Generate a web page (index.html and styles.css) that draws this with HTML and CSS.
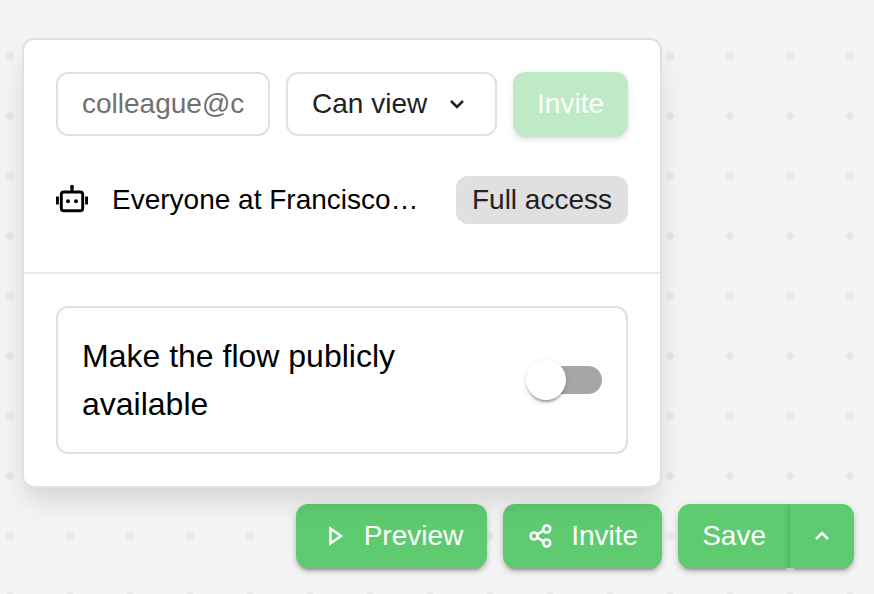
FILE: index.html
```html
<!DOCTYPE html>
<html lang="en">
<head>
  <meta charset="utf-8">
  <meta name="viewport" content="width=device-width, initial-scale=1">
  <title>Share flow</title>
  <link rel="stylesheet" href="styles.css">
</head>
<body>
  <main class="canvas">
    <section class="card" aria-label="Share">
      <div class="share">
        <form class="invite-form">
          <input class="field email" type="email" placeholder="colleague@c" aria-label="Email">
          <div class="select-wrap">
            <select class="field role" aria-label="Access level">
              <option>Can view</option>
            </select>
            <svg class="chevron" viewBox="0 0 32 32" aria-hidden="true"><path d="m10 13 6 6 6-6"/></svg>
          </div>
          <button class="button is-disabled" type="submit" disabled>Invite</button>
        </form>
        <div class="member">
          <svg class="icon-large robot" viewBox="0 0 32 32" aria-hidden="true">
            <rect x="5.300" y="8" width="21.400" height="18.700" rx="2.500"/>
            <path d="M16 8V3M1.400 12.500v8M30.600 12.500v8"/>
            <g class="solid"><circle cx="16" cy="2.800" r="2"/><circle cx="12" cy="17.300" r="2"/><circle cx="20" cy="17.300" r="2"/></g>
          </svg>
          <span class="member-name">Everyone at Francisco…</span>
          <span class="chip">Full access</span>
        </div>
      </div>
      <div class="public">
        <label class="public-box">
          <span class="public-text">Make the flow publicly available</span>
          <input class="switch" type="checkbox" role="switch">
        </label>
      </div>
    </section>
    <div class="actions">
      <button class="button" type="button">
        <svg class="icon" viewBox="0 0 28 28" aria-hidden="true"><path d="M10.500 6.800v14.400L21 14z"/></svg>
        Preview
      </button>
      <button class="button" type="button">
        <svg class="icon" viewBox="0 0 28 28" aria-hidden="true">
          <circle cx="7" cy="14" r="3.500"/><circle cx="19.700" cy="7" r="3.500"/><circle cx="19.700" cy="21" r="3.500"/>
          <path d="m10.100 12.300 6.500-3.600M10.100 15.700l6.500 3.600"/>
        </svg>
        Invite
      </button>
      <div class="split">
        <button class="button" type="button">Save</button>
        <button class="button caret" type="button" aria-label="More">
          <svg class="icon-large" viewBox="0 0 32 32" aria-hidden="true"><path d="m10 19 6-6 6 6"/></svg>
        </button>
      </div>
    </div>
  </main>
</body>
</html>
```
FILE: styles.css
```css
* {
  box-sizing: border-box;
}

body {
  margin: 0;
  color: #000;
  font: 28px/40px "Liberation Sans", Arial, sans-serif;
}

input,
select,
button {
  font: inherit;
}

.canvas {
  display: flex;
  flex-direction: column;
  gap: 16px;
  min-height: 100vh;
  padding: 38px 20px 24px 22px;
  background: #f4f4f4 radial-gradient(circle, #e8e8e8 4px, transparent 4px) -20px 26px / 60px 60px;
}

.card {
  position: relative;
  z-index: 1;
  width: 100%;
  max-width: 640px;
  border: 2px solid #e0e0e0;
  border-radius: 12px;
  background: #fff;
  box-shadow:
    0 16px 24px -8px rgba(0, 0, 0, 0.07),
    0 16px 32px 0 rgba(0, 0, 0, 0.07);
}

.share {
  padding: 32px 32px 48px;
  border-bottom: 2px solid #e8e8e8;
}

.invite-form {
  display: flex;
  gap: 16px;
  margin-bottom: 40px;
}

.field {
  height: 64px;
  border: 2px solid #e0e0e0;
  border-radius: 12px;
  background: #fff;
  color: #222;
}

.email {
  flex: 1;
  min-width: 0;
  padding: 0 24px;
}

.email::placeholder {
  color: #707070;
}

.select-wrap {
  display: grid;
  align-items: center;
}

.select-wrap > * {
  grid-area: 1 / 1;
}

.role {
  appearance: none;
  padding: 0 67px 0 24px;
}

.chevron {
  justify-self: end;
  margin-right: 24px;
  width: 32px;
  height: 32px;
  pointer-events: none;
  color: #222;
}

svg {
  flex: none;
  fill: none;
  stroke: currentColor;
  stroke-width: 2.6;
}

.robot {
  stroke-width: 2.9;
}

.solid {
  fill: currentColor;
  stroke: none;
}

.icon {
  width: 28px;
  height: 28px;
}

.icon-large {
  width: 32px;
  height: 32px;
}

.button {
  display: flex;
  align-items: center;
  gap: 16px;
  height: 64px;
  padding: 0 24px;
  border: 0;
  border-radius: 12px;
  background: #5ecb70;
  color: #fff;
  box-shadow:
    0 6px 2px -4px rgba(0, 0, 0, 0.2),
    0 4px 4px 0 rgba(0, 0, 0, 0.14),
    0 2px 10px 0 rgba(0, 0, 0, 0.12);
}

.is-disabled {
  opacity: 0.4;
}

.member {
  display: flex;
  align-items: center;
  gap: 24px;
}

.member-name {
  flex: 1;
  min-width: 0;
  overflow: hidden;
  text-overflow: ellipsis;
  white-space: nowrap;
}

.chip {
  padding: 4px 16px;
  border-radius: 12px;
  background: #e0e0e0;
  color: #222;
  white-space: nowrap;
}

.public {
  padding: 32px;
}

.public-box {
  display: flex;
  align-items: center;
  justify-content: space-between;
  gap: 64px;
  padding: 24px;
  border: 2px solid #e0e0e0;
  border-radius: 12px;
}

.public-text {
  max-width: 400px;
  font-size: 32px;
  line-height: 48px;
}

.switch {
  appearance: none;
  flex: none;
  position: relative;
  width: 68px;
  height: 28px;
  margin: 0;
  border-radius: 14px;
  background: #a6a6a6;
}

.switch::before {
  content: "";
  position: absolute;
  top: -6px;
  left: -8px;
  width: 40px;
  height: 40px;
  border-radius: 50%;
  background: #fff;
  box-shadow:
    0 4px 2px -2px rgba(0, 0, 0, 0.2),
    0 2px 2px 0 rgba(0, 0, 0, 0.14),
    0 2px 6px 0 rgba(0, 0, 0, 0.12);
}

.switch:checked::before {
  left: 36px;
}

.actions {
  display: flex;
  justify-content: flex-end;
  gap: 16px;
}

.split {
  display: flex;
}

.split .button:first-child {
  border-radius: 12px 0 0 12px;
}

.split .caret {
  padding: 0 16px;
  border-radius: 0 12px 12px 0;
}
```
